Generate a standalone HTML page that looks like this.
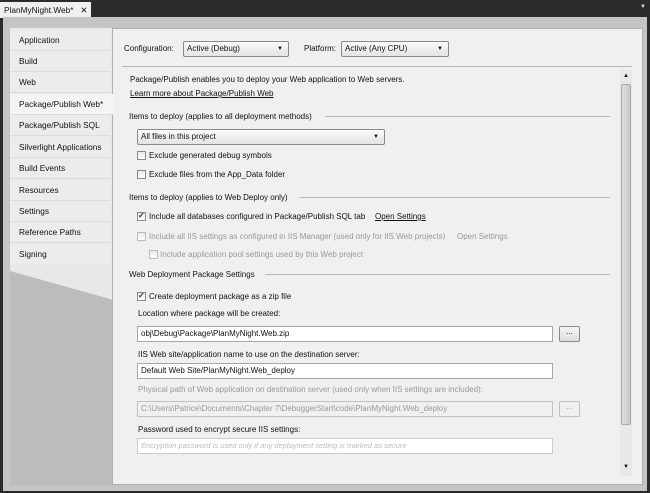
<!DOCTYPE html>
<html><head><style>
*{margin:0;padding:0;box-sizing:border-box}
body{width:650px;height:493px;background:#2b2b2b;font-family:"Liberation Sans",sans-serif;font-size:8px;color:#111;position:relative;overflow:hidden}
.a{position:absolute;white-space:nowrap}
.nav{position:absolute;left:10px;width:100px;height:21px;line-height:21px;padding-left:9px;border-bottom:1px solid #dcdcdc;background:#ececec;font-size:8.3px}
.cb{position:absolute;width:9px;height:9px;border:1px solid #8a8a8a;background:linear-gradient(#e8e8e8,#fff)}
.cb.c::after{content:"✓";position:absolute;left:0;top:-2px;font-size:8px;font-weight:bold;color:#333}
.cb.d{border-color:#bbb}
.line{position:absolute;height:1px;background:#b8b8b8}
.inp{position:absolute;height:16px;background:#fff;border:1px solid #a8a8a8;padding-left:3px;line-height:14px}
.btn{position:absolute;width:21px;height:16px;border:1px solid #8a8a8a;border-radius:2px;background:linear-gradient(#f6f6f6,#ddd);text-align:center;line-height:10px;font-size:8px}
.dd{position:absolute;height:16px;border:1px solid #8a8a8a;border-radius:2px;background:linear-gradient(#fafafa,#e4e4e4);padding-left:3px;line-height:14px}
.dd::after{content:"▼";position:absolute;right:5px;top:0;font-size:6px}
.g{color:#999}
</style></head><body>
<div class="a" style="left:0;top:2px;width:91px;height:16px;background:#f0f0f0;padding-left:4px;line-height:16px;font-size:8.3px">PlanMyNight.Web* &nbsp;&nbsp;✕</div>
<div class="a" style="right:4px;top:4px;color:#ddd;font-size:6px">▼</div>
<div class="a" style="left:3px;top:17px;width:644px;height:474px;background:#c4c4c4"></div>
<div class="a" style="left:10px;top:28px;width:633px;height:457px;background:#bcbcbc"></div>
<svg class="a" style="left:10px;top:28px" width="104" height="275"><polygon points="0,0 104,0 104,273 100,271 0,243" fill="#e8e8e8"/></svg>
<div class="a" style="left:112px;top:28px;width:531px;height:457px;background:#f0f0f0;border:1px solid #b0b0b0"></div>
<div class="nav" style="top:30px">Application</div>
<div class="nav" style="top:51px">Build</div>
<div class="nav" style="top:72px">Web</div>
<div class="nav" style="top:94px;width:104px;background:#f4f4f4">Package/Publish Web*</div>
<div class="nav" style="top:115px">Package/Publish SQL</div>
<div class="nav" style="top:137px">Silverlight Applications</div>
<div class="nav" style="top:158px">Build Events</div>
<div class="nav" style="top:180px">Resources</div>
<div class="nav" style="top:201px">Settings</div>
<div class="nav" style="top:222px">Reference Paths</div>
<div class="nav" style="top:244px;border:none">Signing</div>

<div class="a" style="left:124px;top:44px">Configuration:</div>
<div class="dd" style="left:183px;top:41px;width:106px">Active (Debug)</div>
<div class="a" style="left:304px;top:44px">Platform:</div>
<div class="dd" style="left:341px;top:41px;width:108px">Active (Any CPU)</div>
<div class="line" style="left:122px;top:66px;width:510px"></div>
<div class="a" style="left:620px;top:70px;width:12px;height:406px;background:#e8e8e8"></div>
<div class="a" style="left:621px;top:84px;width:10px;height:341px;background:linear-gradient(90deg,#e0e0e0,#c8c8c8);border:1px solid #aaa;border-radius:2px"></div>
<div class="a" style="left:623px;top:73px;font-size:6px">▲</div>
<div class="a" style="left:623px;top:464px;font-size:6px">▼</div>

<div class="a" style="left:130px;top:75px">Package/Publish enables you to deploy your Web application to Web servers.</div>
<div class="a" style="left:130px;top:89px;text-decoration:underline">Learn more about Package/Publish Web</div>
<div class="a" style="left:129px;top:112px">Items to deploy (applies to all deployment methods)</div>
<div class="line" style="left:325px;top:116px;width:285px"></div>
<div class="dd" style="left:137px;top:129px;width:248px">All files in this project</div>
<div class="cb" style="left:137px;top:151px"></div><div class="a" style="left:149px;top:151px">Exclude generated debug symbols</div>
<div class="cb" style="left:137px;top:170px"></div><div class="a" style="left:149px;top:170px">Exclude files from the App_Data folder</div>
<div class="a" style="left:129px;top:193px">Items to deploy (applies to Web Deploy only)</div>
<div class="line" style="left:300px;top:197px;width:310px"></div>
<div class="cb c" style="left:137px;top:212px"></div><div class="a" style="left:149px;top:212px">Include all databases configured in Package/Publish SQL tab</div>
<div class="a" style="left:375px;top:212px;text-decoration:underline">Open Settings</div>
<div class="cb d" style="left:137px;top:232px"></div><div class="a g" style="left:149px;top:232px">Include all IIS settings as configured in IIS Manager (used only for IIS Web projects)</div>
<div class="a g" style="left:457px;top:232px">Open Settings</div>
<div class="cb d" style="left:149px;top:250px"></div><div class="a g" style="left:160px;top:250px">Include application pool settings used by this Web project</div>
<div class="a" style="left:129px;top:270px">Web Deployment Package Settings</div>
<div class="line" style="left:265px;top:274px;width:345px"></div>
<div class="cb c" style="left:137px;top:292px"></div><div class="a" style="left:149px;top:292px">Create deployment package as a zip file</div>
<div class="a" style="left:138px;top:309px">Location where package will be created:</div>
<div class="inp" style="left:137px;top:326px;width:416px">obj\Debug\Package\PlanMyNight.Web.zip</div>
<div class="btn" style="left:559px;top:326px">...</div>
<div class="a" style="left:138px;top:350px">IIS Web site/application name to use on the destination server:</div>
<div class="inp" style="left:137px;top:363px;width:416px">Default Web Site/PlanMyNight.Web_deploy</div>
<div class="a g" style="left:138px;top:385px">Physical path of Web application on destination server (used only when IIS settings are included):</div>
<div class="inp g" style="left:137px;top:401px;width:416px;background:#f0f0f0;border-color:#c0c0c0">C:\Users\Patrice\Documents\Chapter 7\DebuggerStart\code\PlanMyNight.Web_deploy</div>
<div class="btn g" style="left:559px;top:401px;border-color:#c0c0c0;background:#f0f0f0">...</div>
<div class="a" style="left:138px;top:425px">Password used to encrypt secure IIS settings:</div>
<div class="inp" style="left:137px;top:438px;width:416px;color:#bbb;font-style:italic;font-size:7.5px;border-color:#ccc">Encryption password is used only if any deployment setting is marked as secure</div>
</body></html>
